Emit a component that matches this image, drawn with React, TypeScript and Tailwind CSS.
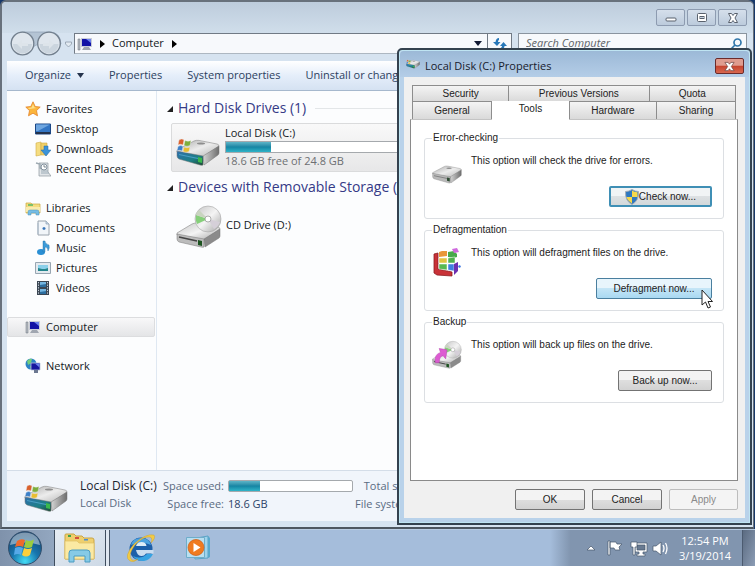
import type { ReactNode } from "react";
import clsx from "clsx";

const DriveIcon = ({ className, windows }: { className?: string; windows?: boolean }) => (
  <svg viewBox="0 0 44 28" className={className} aria-hidden="true">
    <defs>
      <linearGradient id="driveTop" x1="0" y1="0" x2="1" y2="1">
        <stop offset="0" stopColor="#a9a9a9" />
        <stop offset=".5" stopColor="#ececec" />
        <stop offset="1" stopColor="#b3b3b3" />
      </linearGradient>
      <linearGradient id="driveSide" x1="0" y1="0" x2="1" y2="0">
        <stop offset="0" stopColor="#d5d5d5" />
        <stop offset="1" stopColor="#6d6d6d" />
      </linearGradient>
      <linearGradient id="driveFront" x1="0" y1="0" x2="1" y2="1">
        <stop offset="0" stopColor="#2f6fae" />
        <stop offset=".6" stopColor="#1d7f86" />
        <stop offset="1" stopColor="#1d4a33" />
      </linearGradient>
    </defs>
    <path d="M1 12 18 3q2-1 5-.6L41 6q2 .5 2 2L27 19 1 14z" fill="url(#driveTop)" stroke="#8b8b8b" strokeWidth=".6" />
    <path d="M27 18 43 8v7q0 1-1 2L28 27z" fill="url(#driveSide)" stroke="#777" strokeWidth=".5" />
    <path d="M1 13 27 18v9q-1 .6-3 0L3 21q-2-1-2-3z" fill={windows ? "url(#driveFront)" : "#b9b9b9"} stroke="#777" strokeWidth=".5" />
    <path d="M3 16.500 22 20.500" stroke={windows ? "#4a9fc4" : "#777"} strokeWidth="1.200" />
    <path d="M22 19l4 1v5l-4-1z" fill={windows ? "#3ab94c" : "#2f4b33"} />
    <ellipse cx="25" cy="5.500" rx="4" ry="1.100" fill="#8d8d8d" />
    {windows && (
      <g stroke="#eee" strokeWidth=".4">
        <path d="M3 2q3-2 5 0L7 7Q4 5.500 2 7z" fill="#d9602c" />
        <path d="M9 2.500q3 1.500 6 0l-1 5q-3 1.500-6 0z" fill="#7dae3c" />
        <path d="M2 8.500q3-2 5 0l-1 4.500q-3-1.500-5 0z" fill="#3b7fc8" />
        <path d="M8 9q3 1.500 6 0l-1 4.500q-3 1.500-6 0z" fill="#e8bd31" />
      </g>
    )}
  </svg>
);

const DiscDriveIcon = ({ className, backup }: { className?: string; backup?: boolean }) => (
  <svg viewBox="0 0 46 44" className={className} aria-hidden="true">
    <defs>
      <linearGradient id="discShine" x1="0" y1="0" x2="1" y2="1">
        <stop offset="0" stopColor="#c4c4c4" />
        <stop offset=".5" stopColor="#f4f4f4" />
        <stop offset="1" stopColor="#a2a2a2" />
      </linearGradient>
    </defs>
    <path d="M1 28 16 19q2-1 5-1l21 4q2 .5 2 2L28 35 1 30z" fill="url(#discShine)" stroke="#888" strokeWidth=".6" />
    <path d="M28 34 44 24v7q0 1-1 2L29 42z" fill="#8b8b8b" stroke="#777" strokeWidth=".5" />
    <path d="M1 29 28 34v8q-1 .6-3 0L3 37q-2-1-2-3z" fill="#bcbcbc" stroke="#777" strokeWidth=".5" />
    <path d="M3 32 21 36" stroke="#444" strokeWidth="1.500" />
    <path d="M22 35l4 1v5l-4-1z" fill="#1c5320" />
    <circle cx="32" cy="14" r="13" fill="url(#discShine)" stroke="#a5a5a5" strokeWidth=".6" />
    <path d="M32 14 20 10q-1 5 1 9z" fill="#86cf7a" />
    <path d="M32 14 23 5q-3 2-3 5z" fill="#c9d4c0" />
    <path d="M32 14 44 17q-2 5-6 7z" fill="#d5cfd8" />
    <circle cx="32" cy="14" r="3" fill="#fff" stroke="#999" strokeWidth=".8" />
    {backup && <path d="M5 34Q3 21 13 18l-2-6 12 2-2 14-4-5q-6 1-6 11z" fill="#dd5bd2" stroke="#b84aaf" strokeWidth=".8" />}
  </svg>
);

const DefragIcon = ({ className }: { className?: string }) => (
  <svg viewBox="0 0 30 30" className={className} aria-hidden="true">
    <path d="M2 6l4-1v16l14 3v4L5 27l-3-2z" fill="#c93238" stroke="#8d1d22" strokeWidth=".8" />
    <path d="M7 6V4l3-1h5v5l-8 1z" fill="#e9973a" />
    <path d="M16 4l6-1 3 3v3l-3 1-6-1z" fill="#47a84a" />
    <path d="M7 10h8v5H7z" fill="#e2c443" stroke="#fff" strokeWidth=".5" />
    <path d="M16 10l7-1v6h-7z" fill="#4fb04f" stroke="#fff" strokeWidth=".5" />
    <path d="M7 16h8v6l-8-1z" fill="#58b852" stroke="#fff" strokeWidth=".5" />
    <path d="M16 16h6v7l-6-1z" fill="#3f7fe0" stroke="#fff" strokeWidth=".5" />
    <path d="M22 16l4-2v9l-4 4z" fill="#6c2fb0" />
    <path d="M20 1l5-1 2 4-5 1z" fill="#cf6ade" />
    <path d="M27 17l2 1-1 2-2-1z" fill="#3f77e0" />
  </svg>
);

const ComputerIcon = () => (
  <svg viewBox="0 0 16 16" className="size-4" aria-hidden="true">
    <path d="M1 3h2v11H1z" fill="#b7bcc4" stroke="#6b7078" strokeWidth=".5" />
    <path d="M4 2h11v9H4z" fill="#c8ccd8" />
    <path d="M5 3h9v7H5z" fill="#1212a5" />
    <path d="M9 3h5v4z" fill="#6d83ee" />
    <path d="M7 11h5l2 3H5z" fill="#a0a6b0" />
  </svg>
);

const StarIcon = () => (
  <svg viewBox="0 0 16 16" className="size-4" aria-hidden="true">
    <path d="M8 .8l2.200 4.700 5 .6-3.700 3.500 1 5.200L8 12.200l-4.500 2.600 1-5.200L.8 6.100l5-.6z" fill="#fbb53c" stroke="#e2832a" strokeWidth=".8" />
    <path d="M8 3l1.500 3.500 2 .4-7 1L2.500 7l4-.6z" fill="#fde08a" />
  </svg>
);

const DesktopIcon = () => (
  <svg viewBox="0 0 16 16" className="size-4" aria-hidden="true">
    <path d="M.5 3h15v10H.5z" fill="#3275c4" stroke="#1c4784" />
    <path d="M1 3.500h14L3 10H1z" fill="#6ea6e0" />
    <path d="M1 11h14v2H1z" fill="#24324b" />
  </svg>
);

const DownloadsIcon = () => (
  <svg viewBox="0 0 16 16" className="size-4" aria-hidden="true">
    <path d="M1 2l5-1v13l-5 1z" fill="#f5dd81" stroke="#d0ac45" strokeWidth=".6" />
    <path d="M6 2h6v12H6z" fill="#f0cf67" stroke="#d0ac45" strokeWidth=".6" />
    <path d="M9 5h4v4h3l-5 6-5-6h3z" fill="#3b93d8" stroke="#2369a4" strokeWidth=".5" />
  </svg>
);

const RecentIcon = () => (
  <svg viewBox="0 0 16 16" className="size-4" aria-hidden="true">
    <path d="M4 2h9v9l3 4H4z" fill="#e1e5e8" stroke="#8e979e" strokeWidth=".7" />
    <path d="M6 10h7M6 12h8" stroke="#9aaab5" />
    <path d="M1 2l4 1v4l2 1" fill="none" stroke="#9eaab2" strokeWidth="1.500" />
    <circle cx="9" cy="6" r="3" fill="#fff" stroke="#8493a0" />
    <path d="M9 4v2h2" stroke="#4b5b68" fill="none" strokeWidth=".7" />
  </svg>
);

const LibraryIcon = () => (
  <svg viewBox="0 0 16 16" className="size-4" aria-hidden="true">
    <path d="M1 3h5l1 1h8v9H1z" fill="#f4dd80" stroke="#caa63d" strokeWidth=".7" />
    <path d="M3 4h5v2H3z" fill="#7cc06a" />
    <path d="M1 7h14v5H1z" fill="#faebac" />
    <path d="M3 15v-3q0-2 2-2h7q2 0 2 2v3h-3v-2H6v2z" fill="#77bde4" stroke="#4a93be" strokeWidth=".5" />
  </svg>
);

const DocumentIcon = () => (
  <svg viewBox="0 0 16 16" className="size-4" aria-hidden="true">
    <path d="M3 1h8l3 3v11H3z" fill="#f1f5f9" stroke="#9aa4ae" />
    <path d="M2 3h2v11H2z" fill="#bac5d0" />
    <path d="M11 1v3h3" fill="#c6d6e6" stroke="#8ca0b4" strokeWidth=".7" />
    <path d="M9 7v3M7.500 8.500h3" stroke="#3673b8" strokeWidth="1.300" />
  </svg>
);

const MusicIcon = () => (
  <svg viewBox="0 0 16 16" className="size-4" aria-hidden="true">
    <ellipse cx="6" cy="12" rx="4" ry="3" fill="#2a8fd4" />
    <path d="M8 1h2q0 3 4 4 1 3-1 6 0-4-3-4v5H8z" fill="#3d9bd8" stroke="#1d6ba5" strokeWidth=".4" />
  </svg>
);

const PictureIcon = () => (
  <svg viewBox="0 0 16 16" className="size-4" aria-hidden="true">
    <path d="M.5 2.500h15v11H.5z" fill="#e3eaef" stroke="#98a6b2" />
    <path d="M3 5h10v6H3z" fill="#8ad0ea" />
    <path d="M3 8l4 1 3 0 3-1v3H3z" fill="#23858c" />
  </svg>
);

const VideoIcon = () => (
  <svg viewBox="0 0 16 16" className="size-4" aria-hidden="true">
    <path d="M2 1h12v14H2z" fill="#3b4653" />
    <path d="M5 2h6v5H5zM5 9h6v5H5z" fill="#73b5e0" />
    <path d="M5 5l6-1v3H5zM5 12l6-1v3H5z" fill="#2c6d9e" />
    <path d="M3.500 2v13M12.500 2v13" stroke="#c7d2dc" strokeDasharray="1.300 1.300" />
  </svg>
);

const NetworkIcon = () => (
  <svg viewBox="0 0 16 16" className="size-4" aria-hidden="true">
    <circle cx="6" cy="6" r="5.500" fill="#2d83c6" />
    <path d="M2 3q3-3 5-2L6 5 3 7zM5 8l3 1-2 2z" fill="#74ce7b" />
    <path d="M6 5h9v7H6z" fill="#17179f" stroke="#b9c3d8" strokeWidth=".8" />
    <path d="M10 5.500h4.500v4z" fill="#6d83ee" />
    <path d="M9 12h4v3H9z" fill="#6c7891" />
  </svg>
);

const ShieldIcon = () => (
  <svg viewBox="0 0 14 16" className="h-4 w-3.5" aria-hidden="true">
    <path d="M7 .5Q10 2.500 13.500 2.500 14 12 7 15.500 0 12 .5 2.500 4 2.500 7 .5z" fill="#2f78c0" stroke="#a6aeb6" />
    <path d="M7 1.500Q9 3 12.500 3.300V8H7zM7 8v6.400Q2.500 12 1.600 8z" fill="#f5d84b" />
  </svg>
);

const StartOrb = () => (
  <svg viewBox="0 0 36 36" className="size-9" aria-hidden="true">
    <defs>
      <radialGradient id="orb" cx=".5" cy=".9" r=".9">
        <stop offset="0" stopColor="#43dcf5" />
        <stop offset=".45" stopColor="#1876ae" />
        <stop offset="1" stopColor="#173f69" />
      </radialGradient>
    </defs>
    <circle cx="18" cy="18" r="16.500" fill="url(#orb)" stroke="#34506d" />
    <path d="M3 15Q5 3 18 2.500 31 3 33 15q-15-5-30 0z" fill="#fff" opacity=".45" />
    <path d="M10 11q4-3 8-1l-2 7q-3-2-8 0z" fill="#ee6a2c" />
    <path d="M19 10q4 2 8-.5l-2 7.500q-4 2-8 0z" fill="#9bcc3f" />
    <path d="M8 18q4-2 8 0l-2 7q-3-2-7 0z" fill="#56a9e8" />
    <path d="M17 18q4 2 8 0l-2 7q-4 3-8 0z" fill="#fbcf3c" />
  </svg>
);

const ExplorerIcon = () => (
  <svg viewBox="0 0 34 30" className="h-[30px] w-[34px]" aria-hidden="true">
    <path d="M2 5V2q0-1 1-1h8l2 2h6l2 2h8q2 0 2 2v19H2z" fill="#efcf6d" stroke="#c9a545" />
    <path d="M5 2h3v2H5z" fill="#3ea34b" />
    <path d="M12 4h4v2h-4z" fill="#d4503c" />
    <path d="M21 6h4v1.500h-4z" fill="#4a8fd1" />
    <path d="M2 8h12l2 2h15v16H2z" fill="#fbe9a2" stroke="#dfbf62" strokeWidth=".7" />
    <path d="M6 29v-9q0-3 3-3h15q3 0 3 3v9h-5v-6H11v6z" fill="#86cae6" stroke="#4b9cc2" />
  </svg>
);

const BrowserIcon = () => (
  <svg viewBox="0 0 30 30" className="size-[30px]" aria-hidden="true">
    <circle cx="15" cy="16" r="11.500" fill="#1c5fa9" />
    <path d="M5 12q2-7 10-7t10 7q-10-5-20 0z" fill="#4ba2e0" />
    <path d="M10 13q1-4 5.500-4t5 4z" fill="#dcecf8" />
    <path d="M10 17h17.500v3.500H20q-2 3-5 2.500-4-.5-5-6z" fill="#c9ddf0" />
    <path d="M21 21h6q-3 6-9 7-8 0-11-5 8 4 14-2z" fill="#36a3e2" />
    <path d="M4 28Q-3 24 8 11 20 0 28 2q2 3-3 8 2-5-1-6-7-1-15 8-8 11-3 15 3 1 6-1-4 4-8 2z" fill="#f2cb45" stroke="#c69a2a" strokeWidth=".4" />
  </svg>
);

const PlayerIcon = () => (
  <svg viewBox="0 0 28 26" className="h-[26px] w-7" aria-hidden="true">
    <path d="M6 4l17-3v22l-13 1z" fill="#9fd4ec" stroke="#5aa3c6" />
    <path d="M23 1l2 2v19l-2 1z" fill="#5aa9cc" />
    <path d="M1.500 2.500h18v20h-18z" fill="#b9dff0" stroke="#6eadca" />
    <circle cx="11" cy="12.500" r="8" fill="#ef7b20" stroke="#cf5c11" strokeWidth=".7" />
    <path d="M8.500 8l7 4.500-7 4.500z" fill="#fff" />
  </svg>
);

const MouseCursor = () => (
  <svg viewBox="0 0 13 20" className="absolute left-[105px] top-[11px] h-5 w-[13px]" aria-hidden="true">
    <path d="M1 1v15l3.500-3 2.500 6 2.500-1L7 12.500h4.500z" fill="#fff" stroke="#222" />
  </svg>
);

const placeGroups = [
  {
    name: "Favorites",
    icon: <StarIcon />,
    items: [
      { name: "Desktop", icon: <DesktopIcon /> },
      { name: "Downloads", icon: <DownloadsIcon /> },
      { name: "Recent Places", icon: <RecentIcon /> },
    ],
  },
  {
    name: "Libraries",
    icon: <LibraryIcon />,
    items: [
      { name: "Documents", icon: <DocumentIcon /> },
      { name: "Music", icon: <MusicIcon /> },
      { name: "Pictures", icon: <PictureIcon /> },
      { name: "Videos", icon: <VideoIcon /> },
    ],
  },
  { name: "Computer", icon: <ComputerIcon />, selected: true, items: [] },
  { name: "Network", icon: <NetworkIcon />, items: [] },
];

const Meter = ({ value, className }: { value: number; className?: string }) => (
  <div className={clsx("h-3 border border-[#a5a9ad] bg-white", className)}>
    <div className="h-full bg-linear-to-b from-[#5cb5c8] via-[#1585a3] to-[#2fb4c8]" style={{ width: `${value}%` }} />
  </div>
);

const SectionHeading = ({ children }: { children: ReactNode }) => (
  <div className="flex h-5 items-center gap-[5px] whitespace-nowrap">
    <svg viewBox="0 0 7 7" className="size-[7px]" aria-hidden="true">
      <path d="M7 1v6H1z" fill="#222" />
    </svg>
    <h2 className="text-sm text-[#353a86]">{children}</h2>
    <span className="ml-1 h-px flex-1 bg-[#e3e6e8]" />
  </div>
);

const WindowButton = ({ label, children }: { label: string; children: ReactNode }) => (
  <button
    aria-label={label}
    className="flex h-[17px] w-[29px] items-center justify-center rounded-[2px] border border-[#8d9bb0] bg-linear-to-b from-[#d5dfeb] to-[#bccbdc]"
  >
    <svg viewBox="0 0 12 12" className="size-3" fill="#fff" stroke="#59616d" aria-hidden="true">
      {children}
    </svg>
  </button>
);

const Explorer = () => (
  <div className="absolute inset-y-0 left-0 right-px flex flex-col rounded-t-md border-2 border-r border-[#68717c] border-b-[#4d5660] bg-[#d6e3f0] text-[11px] text-[#141a24]">
    <div className="flex h-[31px] items-start justify-end gap-0.5 rounded-t bg-linear-to-b from-[#bdccdc] to-[#d0deeb] pr-[6px] pt-[7px]">
      <WindowButton label="Minimize">
        <rect x="1" y="6" width="10" height="3" rx="1" />
      </WindowButton>
      <WindowButton label="Restore">
        <rect x="1.500" y="1.500" width="9" height="8" rx="1" />
        <rect x="4" y="4.500" width="4" height="2" fill="#c7d3e1" />
      </WindowButton>
      <WindowButton label="Close">
        <path d="M1.500 1.500h3L6 3.500l1.500-2h3L8 6l2.500 4.500h-3L6 8.500l-1.500 2h-3L4 6z" />
      </WindowButton>
    </div>

    <div className="flex h-[28px] items-start pl-2 pr-[6px]">
      <svg viewBox="0 0 64 26" className="-mt-0.5 h-[26px] w-16" aria-hidden="true">
        <path d="M13 1h27q10 0 11 12-8 9-12 1h-13Q9 28 1 13 2 1 13 1z" fill="#b4c4d4" stroke="#8fa1b4" strokeWidth=".7" />
        <g fill="#dfe6ed" stroke="#727f8d" strokeWidth="1.300">
          <circle cx="12.500" cy="12.500" r="11.300" />
          <circle cx="39" cy="12.500" r="11.300" />
        </g>
        <path d="M3 13a9.500 9.500 0 0 0 19 0zM29.500 13a9.500 9.500 0 0 0 19 0z" fill="#cbd5de" />
        <path d="M7 13l5-4v3h6v3h-6v3zM44 13l-5-4v3h-6v3h6v3z" fill="#dde4ea" />
        <path d="M55.500 11h6v2l-3 3-3-3z" fill="#e2eaf1" stroke="#8d9baa" strokeWidth=".8" />
      </svg>
      <div className="flex h-[21px] min-w-0 flex-1 items-center border border-[#717a85] border-b-[#adb7c1] bg-[#f7f9fc] pl-0.5">
        <ComputerIcon />
        <svg viewBox="0 0 5 8" className="ml-[7px] h-2 w-[5px]" aria-hidden="true">
          <path d="M0 0l5 4-5 4z" />
        </svg>
        <span className="ml-[7px]">Computer</span>
        <svg viewBox="0 0 5 8" className="ml-2 h-2 w-[5px]" aria-hidden="true">
          <path d="M0 0l5 4-5 4z" />
        </svg>
        <svg viewBox="0 0 8 5" className="ml-auto mr-[5px] h-[5px] w-2" aria-hidden="true">
          <path d="M0 0h8L4 5z" fill="#111a33" />
        </svg>
        <button aria-label="Refresh" className="flex h-full w-6 items-center justify-center border-l border-[#717a85]">
          <svg viewBox="0 0 14 12" className="h-3 w-3.5" fill="#2777b8" aria-hidden="true">
            <path d="M6 0v2Q5 2 5 4h2.500L4 8 0 4h2.500Q3 0 6 0zM8 11V9.500q1 0 1-1.500H7l3.500-4L14 8h-2.500q0 3-3.500 3z" />
          </svg>
        </button>
      </div>
      <label className="ml-[6px] flex h-[21px] w-[229px] items-center border border-[#8a949f] bg-[#f7f9fc] pl-[7px] pr-1">
        <input type="search" placeholder="Search Computer" aria-label="Search Computer" className="min-w-0 flex-1 bg-transparent italic outline-none placeholder:text-[#606468]" />
        <svg viewBox="0 0 12 12" className="size-3" fill="none" stroke="#3277aa" strokeWidth="1.700" aria-hidden="true">
          <circle cx="7.500" cy="4.500" r="3.500" />
          <path d="M5 7l-4 4" />
        </svg>
      </label>
    </div>

    <div className="ml-[5px] mr-[6px] flex min-h-0 flex-1 flex-col">
      <div className="flex h-[30px] items-center gap-[25px] overflow-hidden whitespace-nowrap border-b border-[#a6b8cd] bg-linear-to-b from-white via-[#e5eefa] to-[#d5e2f2] pl-[18px] text-[#2d4160]">
        <button className="flex items-center gap-[5px]">
          Organize
          <svg viewBox="0 0 8 5" className="h-[5px] w-2" aria-hidden="true">
            <path d="M1 0h7L4.500 5z" fill="#26344d" />
          </svg>
        </button>
        <button>Properties</button>
        <button>System properties</button>
        <button>Uninstall or change</button>
      </div>

      <div className="flex min-h-0 flex-1 bg-[#fcfdfe]">
        <nav className="flex w-[150px] flex-col gap-[19px] border-r border-[#dfe8f2] pt-2">
          {placeGroups.map((group) => (
            <ul key={group.name}>
              <li
                className={clsx(
                  "flex h-5 items-center gap-[5px]",
                  group.selected
                    ? "mr-px rounded-[2px] border border-[#dcdddf] bg-linear-to-b from-[#f8f8f9] to-[#e4e5e7] pl-[17px]"
                    : "pl-[18px]"
                )}
              >
                {group.icon}
                {group.name}
              </li>
              {group.items.map((item) => (
                <li key={item.name} className="flex h-5 items-center gap-[5px] pl-7">
                  {item.icon}
                  {item.name}
                </li>
              ))}
            </ul>
          ))}
        </nav>

        <main className="min-w-0 flex-1 pl-[9px] pt-[7px]">
          <SectionHeading>Hard Disk Drives (1)</SectionHeading>
          <div className="mb-[5px] ml-[5px] mt-[5px] flex h-[49px] items-center gap-[5px] rounded-[2px] border border-[#dadbdc] bg-linear-to-b from-[#f9f9f9] to-[#e7e7e8] pl-1">
            <DriveIcon windows className="mt-2 h-7 w-11" />
            <div className="flex-1 pb-0.5">
              <p className="leading-4">Local Disk (C:)</p>
              <Meter value={24} className="w-[188px]" />
              <p className="leading-4 text-[#6d6f72]">18.6 GB free of 24.8 GB</p>
            </div>
          </div>
          <SectionHeading>Devices with Removable Storage (1)</SectionHeading>
          <div className="ml-[10px] mt-2 flex items-center gap-1">
            <DiscDriveIcon className="h-11 w-[46px]" />
            <p className="pb-1">CD Drive (D:)</p>
          </div>
        </main>
      </div>

      <footer className="flex h-[51px] items-center overflow-hidden whitespace-nowrap border-t border-[#d4dde8] bg-[#f1f5fb] pb-0.5 pl-[17px] text-[#5a6b82]">
        <DriveIcon windows className="mt-1.5 h-7 w-11" />
        <div className="ml-3 w-[83px] leading-[18px]">
          <p className="text-xs text-[#1d2530]">Local Disk (C:)</p>
          <p>Local Disk</p>
        </div>
        <dl className="grid grid-cols-[auto_auto] items-center gap-x-1 leading-[18px]">
          <dt className="text-right">Space used:</dt>
          <dd>
            <Meter value={25} className="w-[125px] rounded-[2px]" />
          </dd>
          <dt className="text-right">Space free:</dt>
          <dd className="text-[#2c4368]">18.6 GB</dd>
        </dl>
        <div className="ml-0.5 text-right leading-[18px]">
          <p>Total size:</p>
          <p>File system:</p>
        </div>
      </footer>
      <div className="h-[6px]" />
    </div>
  </div>
);

const buttonBase = "flex h-[21px] items-center justify-center rounded-[2px] border";
const buttonPlain = "border-[#737373] bg-linear-to-b from-[#f3f3f3] from-50% via-[#dedede] via-50% to-[#d2d2d2]";

const topTab = "flex h-[17px] items-center justify-center border border-[#8d8d8d] bg-linear-to-b from-[#f4f4f4] to-[#dadada]";

const ToolGroup = ({ title, text, icon, children }: { title: string; text: string; icon: ReactNode; children: ReactNode }) => (
  <fieldset className="rounded-[3px] border border-[#dcdfe3] pb-[11px] pl-[7px] pr-[11px]">
    <legend className="px-px leading-[14px]">{title}</legend>
    <div className="flex gap-[9px] pt-2">
      <div className="flex h-9 w-[30px] items-center justify-center">{icon}</div>
      <p className="leading-4">{text}</p>
    </div>
    <div className="-mt-[3px] flex justify-end">{children}</div>
  </fieldset>
);

const PropertiesDialog = () => (
  <section
    aria-label="Local Disk (C:) Properties"
    className="absolute bottom-1 right-[3px] top-12 flex w-[355px] flex-col rounded-t-[5px] border-2 border-[#34424f] bg-[#b9d2ea] px-[5px] pb-[5px] font-['Liberation_Sans',Arial,sans-serif] text-[10px] text-[#222] shadow-[inset_0_0_0_1px_#bfe4f2]"
  >
    <header className="-mx-1 mt-px flex h-[26px] items-center gap-[5px] rounded-t bg-linear-to-b from-[#9cb9d7] to-[#b4cde7] pl-[6px] pr-[5px]">
      <DriveIcon windows className="h-3 w-3.5" />
      <h1 className="flex-1 pt-1 font-['Open_Sans',sans-serif] text-[11px] text-[#17202c]">Local Disk (C:) Properties</h1>
      <button
        aria-label="Close dialog"
        className="mt-1 flex h-4 w-[29px] items-center justify-center rounded-[2px] border border-[#6b2a2a] bg-linear-to-b from-[#df9c8f] from-45% via-[#c5422d] via-50% to-[#d8674f]"
      >
        <svg viewBox="0 0 12 12" className="size-[11px]" fill="#fff" stroke="#6d4542" strokeWidth=".8" aria-hidden="true">
          <path d="M1 1.500h3.500L6 3.500l1.500-2H11L8 6l3 4.500H7.500L6 8.500l-1.500 2H1L4 6z" />
        </svg>
      </button>
    </header>

    <div className="flex min-h-0 flex-1 flex-col bg-[#f0f0f0] pb-2 pl-[6px] pr-[7px] pt-2">
      <div role="tablist" className="pl-0.5 pr-0.5">
        <div className="flex">
          <button role="tab" className={clsx(topTab, "w-[30%]")}>Security</button>
          <button role="tab" className={clsx(topTab, "-ml-px flex-1")}>Previous Versions</button>
          <button role="tab" className={clsx(topTab, "-ml-px w-[27%]")}>Quota</button>
        </div>
        <div className="flex items-end">
          <button role="tab" className={clsx(topTab, "flex-1 border-y-0")}>General</button>
          <button role="tab" aria-selected="true" className="z-10 -mb-px -mt-px flex h-[19px] w-[77px] items-center justify-center bg-white pb-1">
            Tools
          </button>
          <button role="tab" className={clsx(topTab, "w-[88px] border-y-0")}>Hardware</button>
          <button role="tab" className={clsx(topTab, "-ml-px flex-1 border-y-0")}>Sharing</button>
        </div>
      </div>

      <div role="tabpanel" className="flex flex-1 flex-col gap-1 border border-[#8a8a8a] border-t-[#c4c4c4] bg-white px-[13px] pt-[11px]">
        <ToolGroup title="Error-checking" text="This option will check the drive for errors." icon={<DriveIcon className="mt-1.5 h-5 w-[30px]" />}>
          <button className={clsx(buttonBase, "w-[103px] border-2 border-[#3f8fb5] bg-linear-to-b from-[#f1f4f5] from-50% via-[#dde1e3] via-50% to-[#d3d8da]")}>
            <ShieldIcon />
            Check now...
          </button>
        </ToolGroup>
        <ToolGroup title="Defragmentation" text="This option will defragment files on the drive." icon={<DefragIcon className="size-[30px]" />}>
          <div className="relative">
            <button className={clsx(buttonBase, "w-[116px] border-[#4a7f9f] bg-linear-to-b from-[#e8f5fc] from-45% via-[#c4e5f6] via-50% to-[#a9d9f2]")}>
              Defragment now...
            </button>
            <MouseCursor />
          </div>
        </ToolGroup>
        <ToolGroup title="Backup" text="This option will back up files on the drive." icon={<DiscDriveIcon backup className="size-[30px]" />}>
          <button className={clsx(buttonBase, buttonPlain, "w-[94px]")}>Back up now...</button>
        </ToolGroup>
      </div>

      <div className="flex justify-end gap-[7px] pt-2">
        <button className={clsx(buttonBase, buttonPlain, "w-[70px]")}>OK</button>
        <button className={clsx(buttonBase, buttonPlain, "w-[70px]")}>Cancel</button>
        <button disabled className={clsx(buttonBase, "w-[69px] border-[#bdbdbd] bg-[#f4f4f4] text-[#8a8a8a]")}>
          Apply
        </button>
      </div>
    </div>
  </section>
);

const Taskbar = () => (
  <footer className="flex h-[37px] shrink-0 items-stretch border-t border-[#b9cce2] bg-[#a5bddb]">
    <button aria-label="Start" className="flex w-[54px] items-center justify-center bg-linear-to-r from-[#7f92ab] to-[#93a7c0] pr-1">
      <StartOrb />
    </button>
    <button aria-label="Windows Explorer" className="flex w-[52px] items-center justify-center border-x border-[#3f4d5e] bg-linear-to-br from-[#e6ecf2] to-[#cdd9e6]">
      <ExplorerIcon />
    </button>
    <span className="w-1 border-r border-[#4a5869] bg-[#dfe7f0]" />
    <button aria-label="Internet Explorer" className="ml-4 flex items-center">
      <BrowserIcon />
    </button>
    <button aria-label="Windows Media Player" className="ml-[29px] flex items-center">
      <PlayerIcon />
    </button>
    <div className="ml-auto flex items-center bg-linear-to-r from-[#a5bddb] to-[#8195af] to-10% pl-[36px] text-white">
      <svg viewBox="0 0 82 18" className="h-[18px] w-[82px]" fill="#fff" stroke="#46566c" strokeWidth=".7" aria-hidden="true">
        <path d="M1 11l4-4 4 4z" />
        <path d="M22 2h2v14h-2zM24 3h6l1 2h5l-3 3 1 3h-5l-1-2h-4z" />
        <path d="M49 4h12v9h-4v2h2v2h-8v-2h2v-2h-4z" />
        <path d="M51 6h8v5h-8z" fill="#687a91" />
        <path d="M45 3h6v5h-2v8h-2V8h-2z" />
        <path d="M67 7h3l5-4v13l-5-4h-3z" />
        <path d="M77 6q2 3 0 7M79.500 4q3 5 0 11" fill="none" stroke="#fff" strokeWidth="1.300" />
      </svg>
      <div className="w-[74px] text-center text-[11px] leading-[15px]">
        <p>12:54 PM</p>
        <p>3/19/2014</p>
      </div>
      <button aria-label="Show desktop" className="h-full w-[13px] border-l border-[#4c5b70] bg-linear-to-br from-[#5b6b81] to-[#8c9db5]" />
    </div>
  </footer>
);

export default function App() {
  return (
    <div className="flex min-h-screen flex-col bg-[#17386a] font-['Open_Sans','Noto_Sans',sans-serif]">
      <div className="relative flex-1">
        <Explorer />
        <PropertiesDialog />
      </div>
      <Taskbar />
    </div>
  );
}
